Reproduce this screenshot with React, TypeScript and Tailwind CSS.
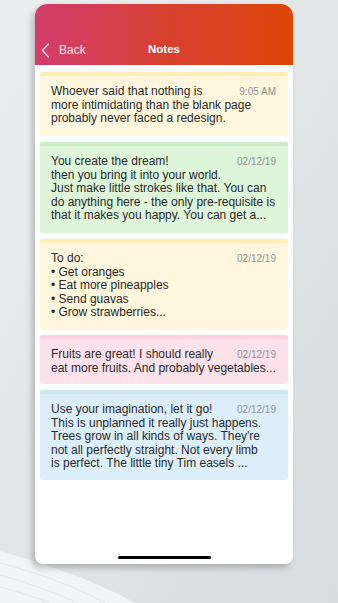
import React from "react"

type Note = {
  lines: string[]
  date: string
  bg: string
  band: string
  h: string
}

const notes: Note[] = [
  {
    lines: [
      "Whoever said that nothing is",
      "more intimidating than the blank page",
      "probably never faced a redesign.",
    ],
    date: "9:05 AM",
    bg: "bg-[#fef6dd]",
    band: "border-[#fdeeb4]",
    h: "h-[64px]",
  },
  {
    lines: [
      "You create the dream!",
      "then you bring it into your world.",
      "Just make little strokes like that. You can",
      "do anything here - the only pre-requisite is",
      "that it makes you happy. You can get a...",
    ],
    date: "02/12/19",
    bg: "bg-[#ddf5d9]",
    band: "border-[#c9efc3]",
    h: "h-[91px]",
  },
  {
    lines: [
      "To do:",
      "\u2022 Get oranges",
      "\u2022 Eat more pineapples",
      "\u2022 Send guavas",
      "\u2022 Grow strawberries...",
    ],
    date: "02/12/19",
    bg: "bg-[#fef6dd]",
    band: "border-[#fdeeb4]",
    h: "h-[90px]",
  },
  {
    lines: ["Fruits are great! I should really", "eat more fruits. And probably vegetables..."],
    date: "02/12/19",
    bg: "bg-[#fde2ec]",
    band: "border-[#fbd3e1]",
    h: "h-[49px]",
  },
  {
    lines: [
      "Use your imagination, let it go!",
      "This is unplanned it really just happens.",
      "Trees grow in all kinds of ways. They're",
      "not all perfectly straight. Not every limb",
      "is perfect. The little tiny Tim easels ...",
    ],
    date: "02/12/19",
    bg: "bg-[#ddeefb]",
    band: "border-[#cde7f1]",
    h: "h-[90px]",
  },
]

function NoteCard({ note }: { note: Note }) {
  return (
    <div className={`${note.bg} ${note.band} ${note.h} border-t-[4px] rounded-[2px] pl-[11px] pr-[12px] pt-[9px]`}>
      <span className="float-right text-[10px] leading-[14px] text-[#939398]">{note.date}</span>
      {note.lines.map((l, i) => (
        <div key={i} className="text-[12px] leading-[13.6px] text-[#2a2a2c] whitespace-nowrap">
          {l}
        </div>
      ))}
    </div>
  )
}

export default function App() {
  return (
    <div
      className="relative w-[338px] h-[603px] overflow-hidden bg-gradient-to-br from-[#eceeef] to-[#d9dcde] pl-[35px] pt-[4px]"
      style={{ fontFamily: '"Liberation Sans", Arial, sans-serif' }}
    >
      {/* paper stack decoration bottom-left */}
      <svg className="absolute left-0 bottom-0" width="338" height="70" viewBox="0 0 338 70">
        <path d="M0 18 C 50 32, 100 50, 135 70 L 0 70 Z" fill="#f2f3f4" />
        <path d="M0 30 C 45 42, 80 56, 105 70" stroke="#e2e4e6" fill="none" />
        <path d="M0 42 C 35 52, 60 62, 78 70" stroke="#e4e6e8" fill="none" />
        <path d="M0 54 C 22 60, 38 65, 50 70" stroke="#e4e6e8" fill="none" />
      </svg>

      <div className="relative w-[258px] h-[560px] bg-white rounded-t-[12px] rounded-b-[8px] overflow-hidden shadow-[-3px_4px_6px_rgba(0,0,0,0.22)] flex flex-col">
        <div className="h-[61px] bg-gradient-to-r from-[#d23d6c] via-[#d8402f] to-[#dc4500] flex items-end pb-[6px] px-[6px] relative">
          <div className="flex items-center gap-[9px] text-white/85">
            <svg width="9" height="15" viewBox="0 0 9 15" fill="none">
              <path d="M7.5 1 L1.5 7.5 L7.5 14" stroke="currentColor" strokeWidth="1.2" strokeLinecap="round" strokeLinejoin="round" />
            </svg>
            <span className="text-[12px]">Back</span>
          </div>
          <div className="absolute left-0 right-0 bottom-[7px] text-center text-white font-bold text-[11.5px]">Notes</div>
        </div>

        <div className="flex flex-col gap-[6px] px-[5px] pt-[7px] flex-1">
          {notes.map((n, i) => (
            <NoteCard key={i} note={n} />
          ))}
        </div>

        <div className="flex justify-center pb-[5px]">
          <div className="w-[93px] h-[3px] rounded-full bg-black" />
        </div>
      </div>
    </div>
  )
}
